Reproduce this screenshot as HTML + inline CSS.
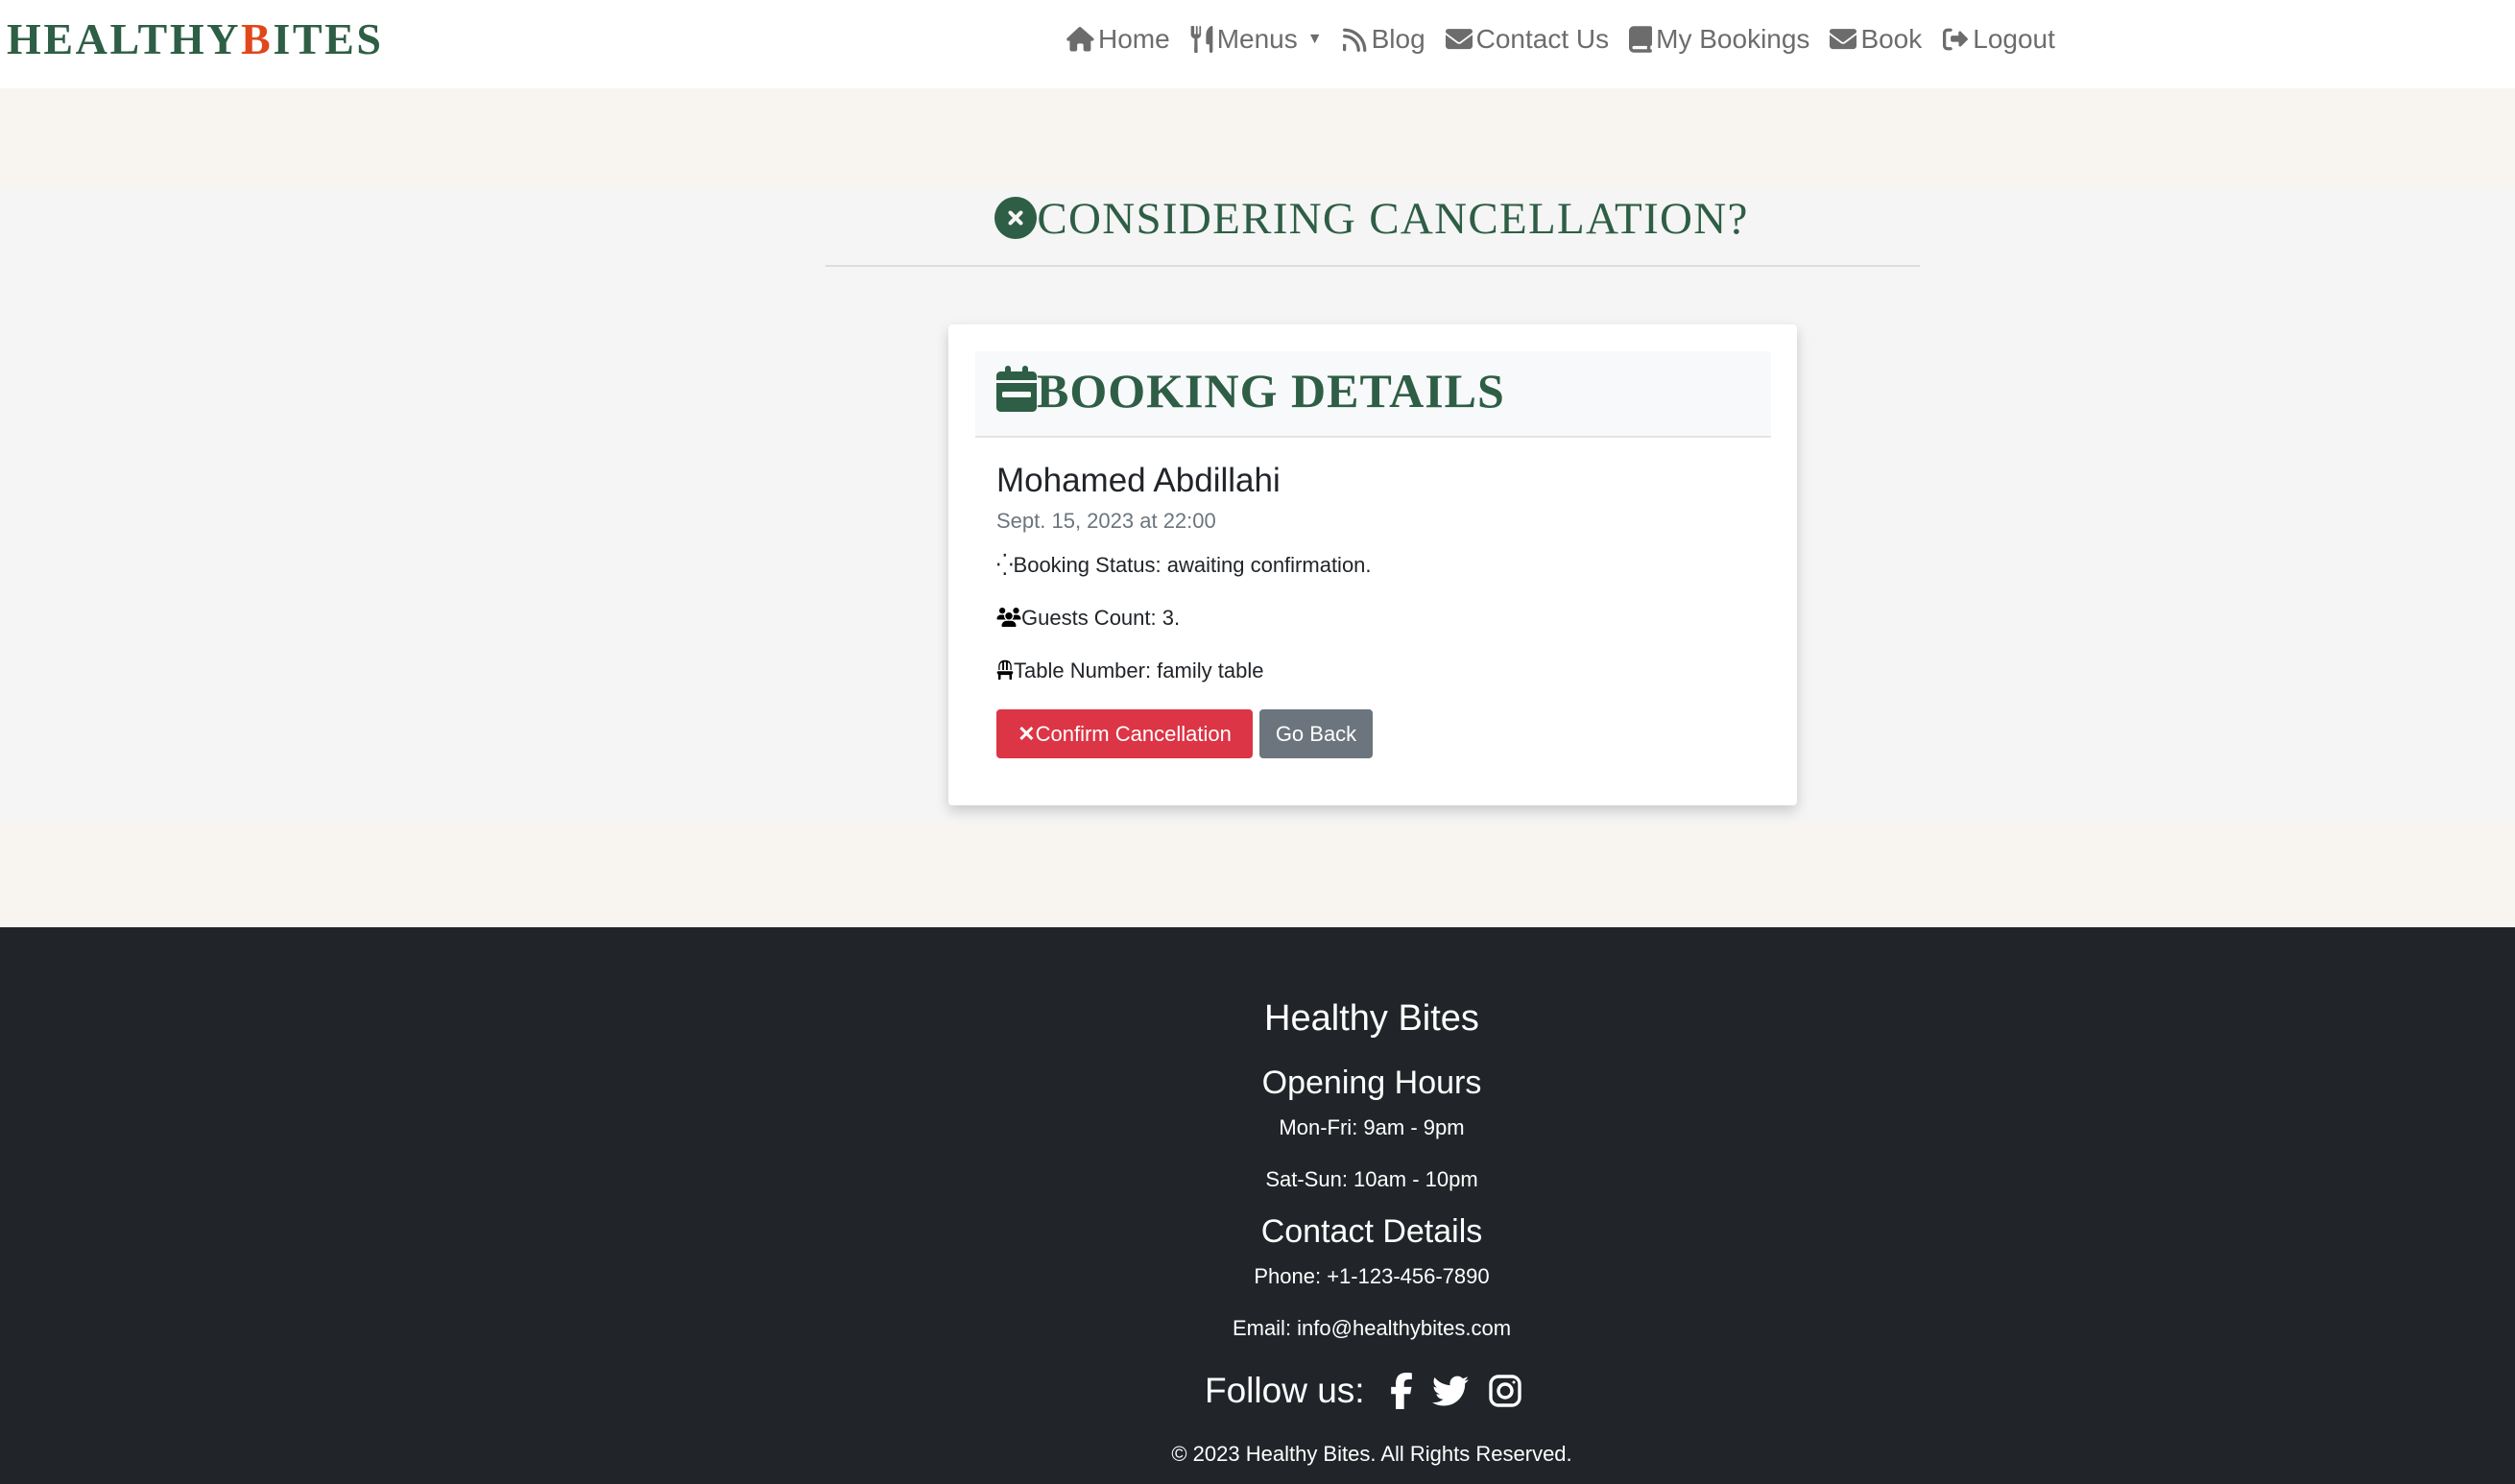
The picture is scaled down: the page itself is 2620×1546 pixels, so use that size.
<!DOCTYPE html>
<html><head><meta charset="utf-8"><style>
*{margin:0;padding:0;box-sizing:border-box}
body{width:2620px;height:1546px;position:relative;font-family:"Liberation Sans",sans-serif;background:#f5f5f5;overflow:hidden}
.a{position:absolute;white-space:nowrap}
.nav{top:0;left:0;width:2620px;height:92px;background:#fff}
.logo{left:7px;top:14px;font-family:"Liberation Serif",serif;font-weight:bold;font-size:46px;color:#2e5e45;letter-spacing:2.6px}
.logo span{color:#e0471b}
.menu{top:25px;left:1110px;font-size:28px;color:#6c6c6c;display:flex;gap:21px;align-items:center}
.menu div{display:flex;align-items:center;gap:4px}
.menu svg{fill:#6c6c6c}
.ctr{left:0;width:2858px;text-align:center}
.card{left:988px;top:338px;width:884px;height:501px;background:#fff;box-shadow:0 6px 14px rgba(0,0,0,.18);border-radius:4px}
.ch{left:1016px;top:366px;width:829px;height:90px;background:#f8f9fa;border-bottom:2px solid #e4e4e4}
.t{color:#212529;font-size:22px}
.btn{top:739px;height:51px;border-radius:4px;color:#fff;font-size:22px;line-height:51px;text-align:center}
.foot{top:966px;left:0;width:2620px;height:580px;background:#212529}
.w{color:#fff}
</style></head><body>
<div class="a" style="top:92px;left:0;width:2620px;height:105px;background:#f8f5f0"></div>
<div class="a" style="top:856px;left:0;width:2620px;height:110px;background:#f8f5f0"></div>
<div class="a nav"></div>
<div class="a logo">HEALTHY<span>B</span>ITES</div>
<div class="a menu">
<div><svg width="30" height="26" viewBox="0 0 576 512"><path d="M575 255c0 18-15 32-32 32h-32l1 160v16c0 22-18 40-40 40h-72c-22 0-40-18-40-40v-88c0-18-14-32-32-32h-64c-18 0-32 14-32 32v88c0 22-18 40-40 40H120c-22 0-40-18-40-40V287H48c-18 0-32-14-32-32 0-9 3-17 10-24L266 8c7-7 15-8 22-8s15 2 21 7l255 225c8 7 12 15 11 23z"/></svg>Home</div>
<div><svg width="24" height="28" viewBox="0 0 416 512"><path d="M16 0C7 0 0 7 0 16v144c0 40 30 73 68 79l-4 257c0 9 7 16 16 16h32c9 0 16-7 16-16l-4-257c38-6 68-39 68-79V16c0-9-7-16-16-16s-16 7-16 16v128c0 9-7 16-16 16s-16-7-16-16V16c0-9-7-16-16-16S96 7 96 16v128c0 9-7 16-16 16s-16-7-16-16V16C64 7 57 0 48 0H16zm400 32v448c0 18-14 32-32 32s-32-14-32-32V352h-32c-18 0-32-14-32-32V176C288 64 368 0 400 0c9 0 16 14 16 32z"/></svg>Menus <span style="font-size:16px;margin-left:6px">▼</span></div>
<div><svg width="26" height="28" viewBox="0 0 512 512"><path d="M0 64c0-18 14-32 32-32 247 0 448 201 448 448 0 18-14 32-32 32s-32-14-32-32C416 268 244 96 32 96 14 96 0 82 0 64zm0 128c0-18 14-32 32-32 177 0 320 143 320 320 0 18-14 32-32 32s-32-14-32-32c0-141-115-256-256-256-18 0-32-14-32-32zm0 160v112a32 32 0 1 0 64 0V352H0z"/></svg>Blog</div>
<div><svg width="28" height="24" viewBox="0 0 512 400"><path d="M48 0C22 0 0 22 0 48c0 15 7 29 19 38l218 163c11 9 27 9 38 0L493 86c12-9 19-23 19-38 0-26-22-48-48-48H48zM0 112v208c0 35 29 64 64 64h384c35 0 64-29 64-64V112L294 275c-23 17-53 17-76 0L0 112z"/></svg>Contact Us</div>
<div><svg width="24" height="28" viewBox="0 0 448 512"><path d="M96 0C43 0 0 43 0 96v320c0 53 43 96 96 96h320c18 0 32-14 32-32s-14-32-32-32v-64c18 0 32-14 32-32V32c0-18-14-32-32-32H96zm0 384h256v64H96c-18 0-32-14-32-32s14-32 32-32z"/></svg>My Bookings</div>
<div><svg width="28" height="24" viewBox="0 0 512 400"><path d="M48 0C22 0 0 22 0 48c0 15 7 29 19 38l218 163c11 9 27 9 38 0L493 86c12-9 19-23 19-38 0-26-22-48-48-48H48zM0 112v208c0 35 29 64 64 64h384c35 0 64-29 64-64V112L294 275c-23 17-53 17-76 0L0 112z"/></svg>Book</div>
<div><svg width="28" height="26" viewBox="0 0 512 512"><path d="M377 105l128 128c4 4 7 10 7 17s-3 13-7 17L377 395c-6 6-14 9-22 9-18 0-31-14-31-31v-65H192c-18 0-32-14-32-32v-64c0-18 14-32 32-32h128V119c0-17 14-31 31-31 8 0 16 3 22 9zM160 96H96c-18 0-32 14-32 32v256c0 18 14 32 32 32h64c18 0 32 14 32 32s-14 32-32 32H96c-53 0-96-43-96-96V128C0 75 43 32 96 32h64c18 0 32 14 32 32s-14 32-32 32z"/></svg>Logout</div>
</div>

<div class="a ctr" style="top:201px;font-family:'Liberation Serif',serif;font-size:47px;color:#2e5e45;letter-spacing:1.3px"><svg width="44" height="44" viewBox="0 0 512 512" style="vertical-align:-6px;fill:#2e5e45"><path d="M256 512a256 256 0 1 0 0-512 256 256 0 1 0 0 512zm-81-337c9-9 25-9 34 0l47 47 47-47c9-9 25-9 34 0s9 25 0 34l-47 47 47 47c9 9 9 25 0 34s-25 9-34 0l-47-47-47 47c-9 9-25 9-34 0s-9-25 0-34l47-47-47-47c-9-9-9-25 0-34z"/></svg>CONSIDERING CANCELLATION?</div>
<div class="a" style="left:860px;top:276px;width:1140px;height:2px;background:#ddd"></div>

<div class="a card"></div>
<div class="a ch"></div>
<div class="a" style="left:1038px;top:378px;font-family:'Liberation Serif',serif;font-weight:bold;font-size:50px;color:#2e5e45;letter-spacing:1px"><svg width="42" height="50" viewBox="0 0 448 512" style="vertical-align:-6px;fill:#2e5e45"><path d="M128 0c18 0 32 14 32 32v32h128V32c0-18 14-32 32-32s32 14 32 32v32h48c26 0 48 22 48 48v48H0v-48c0-26 22-48 48-48h48V32c0-18 14-32 32-32zM0 192h448v272c0 26-22 48-48 48H48c-26 0-48-22-48-48V192zm80 96c-9 0-16 7-16 16v32c0 9 7 16 16 16h288c9 0 16-7 16-16v-32c0-9-7-16-16-16H80z"/></svg>BOOKING DETAILS</div>
<div class="a t" style="left:1038px;top:481px;font-size:35px">Mohamed Abdillahi</div>
<div class="a" style="left:1038px;top:530px;font-size:22px;color:#6c757d">Sept. 15, 2023 at 22:00</div>
<div class="a t" style="left:1038px;top:576px">⁛Booking Status: awaiting confirmation.</div>
<div class="a t" style="left:1038px;top:631px"><svg width="26" height="20" viewBox="0 0 640 512" style="vertical-align:-2px"><path d="M144 0a80 80 0 1 1 0 160 80 80 0 1 1 0-160zm368 0a80 80 0 1 1 0 160 80 80 0 1 1 0-160zM0 299c0-59 48-107 107-107h43c16 0 31 4 45 10-1 7-2 14-2 22 0 38 17 73 43 96H21c-12 0-21-9-21-21zm405 21c27-23 43-58 43-96 0-8-1-15-2-22 14-6 29-10 45-10h42c59 0 107 48 107 107 0 12-9 21-21 21H405zM224 224a96 96 0 1 1 192 0 96 96 0 1 1-192 0zm-96 261c0-74 60-133 133-133h118c74 0 133 59 133 133 0 15-12 27-27 27H155c-15 0-27-12-27-27z"/></svg>Guests Count: 3.</div>
<div class="a t" style="left:1038px;top:686px"><svg width="18" height="22" viewBox="0 0 448 512" style="vertical-align:-3px"><path d="M248 48V256h48V58c37 15 64 51 64 94v104h32V152C392 68 324 0 240 0H208C124 0 56 68 56 152v104h32V152c0-43 27-79 64-94v198h48V48h48zM48 288c-12 0-23 7-29 18s-4 24 3 34l26 38V480c0 18 14 32 32 32s32-14 32-32V384h224v96c0 18 14 32 32 32s32-14 32-32V378l26-38c7-10 7-23 3-34s-17-18-29-18H48z"/></svg>Table Number: family table</div>
<div class="a btn" style="left:1038px;width:267px;background:#dc3545"><b>✕</b>Confirm Cancellation</div>
<div class="a btn" style="left:1312px;width:118px;background:#6c757d">Go Back</div>

<div class="a foot"></div>
<div class="a ctr w" style="top:1040px;font-size:38px">Healthy Bites</div>
<div class="a ctr w" style="top:1109px;font-size:34px">Opening Hours</div>
<div class="a ctr w" style="top:1162px;font-size:22px">Mon-Fri: 9am - 9pm</div>
<div class="a ctr w" style="top:1216px;font-size:22px">Sat-Sun: 10am - 10pm</div>
<div class="a ctr w" style="top:1264px;font-size:34px">Contact Details</div>
<div class="a ctr w" style="top:1317px;font-size:22px">Phone: +1-123-456-7890</div>
<div class="a ctr w" style="top:1371px;font-size:22px">Email: info@healthybites.com</div>
<div class="a w" style="left:1255px;top:1428px;font-size:37px">Follow us:</div>
<svg class="a" style="left:1448px;top:1430px" width="24" height="38" viewBox="0 0 320 512" fill="#fff"><path d="M80 299v213h116V299h87l18-98H196v-35c0-52 20-72 73-72 16 0 30 0 37 1V6C291 2 256 0 236 0 129 0 80 51 80 160v41H14v98h66z"/></svg>
<svg class="a" style="left:1492px;top:1432px" width="38" height="34" viewBox="0 0 512 416" fill="#fff"><path d="M459 104c1 5 1 9 1 14 0 139-106 299-299 299-59 0-115-17-161-47 8 1 16 1 25 1 49 0 94-17 130-45-46-1-85-31-98-73 7 1 13 2 20 2 9 0 19-1 28-4-48-10-84-52-84-103v-1c14 8 30 13 47 13-28-19-47-51-47-87 0-20 5-38 14-53 52 64 129 105 216 110-2-8-3-16-3-24 0-58 47-105 105-105 30 0 58 13 77 33 24-5 46-13 67-26-8 25-25 45-46 58 21-2 42-8 60-16-14 21-32 40-52 55z"/></svg>
<svg class="a" style="left:1551px;top:1432px" width="34" height="34" viewBox="0 0 34 34" fill="none" stroke="#fff" stroke-width="3.4"><rect x="2" y="2" width="30" height="30" rx="8"/><circle cx="17" cy="17" r="7"/><circle cx="26" cy="8" r="1.5" fill="#fff" stroke="none"/></svg>
<div class="a ctr w" style="top:1502px;font-size:22px">© 2023 Healthy Bites. All Rights Reserved.</div>
</body></html>
